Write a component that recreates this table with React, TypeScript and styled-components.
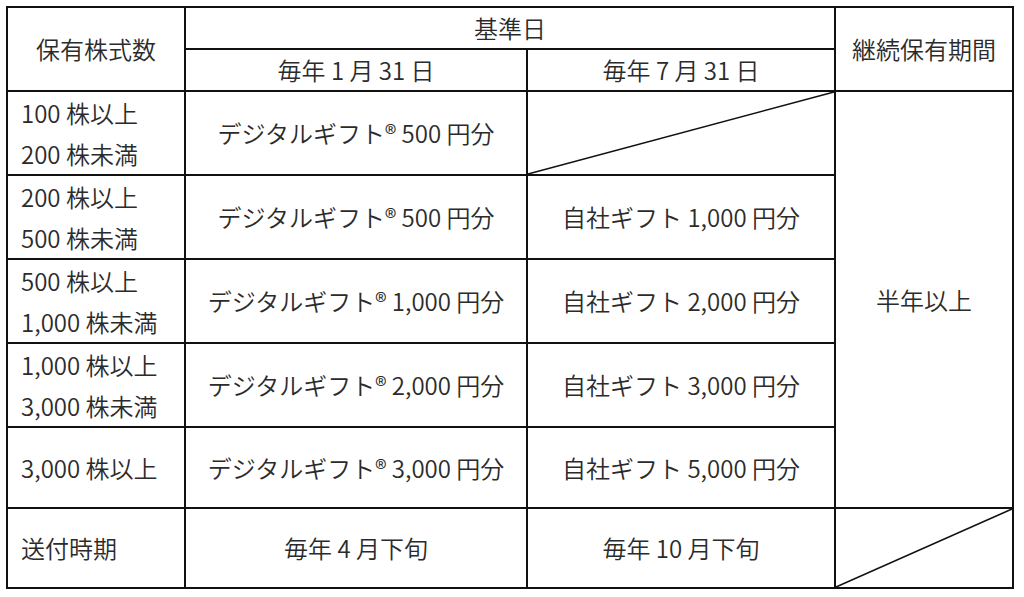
import React from "react";
import styled, { createGlobalStyle } from "styled-components";

const Global = createGlobalStyle`
  html, body { margin: 0; padding: 0; background: #ffffff; }
  body { font-family: "Noto Sans CJK JP", "Noto Sans", sans-serif; }
`;

const Page = styled.div`
  padding: 6px 0 0 6px;
`;

const Table = styled.table`
  border-collapse: collapse;
  table-layout: fixed;
  width: 1008px;
  color: #2b2b2b;
  font-size: 24px;
  font-weight: 350;
`;

const Row = styled.tr<{ $h: number }>`
  height: ${(p) => p.$h}px;
`;

const Cell = styled.td<{ $align?: "left" | "center" }>`
  border: 2px solid #111;
  padding: 0 0 0 ${(p) => (p.$align === "left" ? "13px" : "0")};
  text-align: ${(p) => p.$align ?? "center"};
  vertical-align: middle;
  line-height: 30px;
  white-space: nowrap;
  position: relative;
`;

const Line = styled.div`
  display: block;
  line-height: 41px;
`;

const Slash = styled.svg`
  position: absolute;
  inset: 0;
  width: 100%;
  height: 100%;
  display: block;
  overflow: visible;
`;

const Diagonal: React.FC<{ rowSpan?: number }> = ({ rowSpan }) => (
  <Cell rowSpan={rowSpan}>
    <Slash>
      <line x1="0" y1="100%" x2="100%" y2="0" stroke="#111" strokeWidth="1.4" />
    </Slash>
  </Cell>
);

type Tier = { lines: string[]; jan: string; jul: string | null };

const tiers: Tier[] = [
  { lines: ["100 株以上", "200 株未満"], jan: "デジタルギフト® 500 円分", jul: null },
  { lines: ["200 株以上", "500 株未満"], jan: "デジタルギフト® 500 円分", jul: "自社ギフト 1,000 円分" },
  { lines: ["500 株以上", "1,000 株未満"], jan: "デジタルギフト® 1,000 円分", jul: "自社ギフト 2,000 円分" },
  { lines: ["1,000 株以上", "3,000 株未満"], jan: "デジタルギフト® 2,000 円分", jul: "自社ギフト 3,000 円分" },
  { lines: ["3,000 株以上"], jan: "デジタルギフト® 3,000 円分", jul: "自社ギフト 5,000 円分" },
];

const heights = [84, 84, 84, 84, 81];

export default function App() {
  return (
    <>
      <Global />
      <Page>
        <Table>
          <colgroup>
            <col style={{ width: 178 }} />
            <col style={{ width: 342 }} />
            <col style={{ width: 308 }} />
            <col style={{ width: 178 }} />
          </colgroup>
          <tbody>
            <Row $h={42}>
              <Cell rowSpan={2}>保有株式数</Cell>
              <Cell colSpan={2}>基準日</Cell>
              <Cell rowSpan={2}>継続保有期間</Cell>
            </Row>
            <Row $h={42}>
              <Cell>毎年 1 月 31 日</Cell>
              <Cell>毎年 7 月 31 日</Cell>
            </Row>
            {tiers.map((t, i) => (
              <Row $h={heights[i]} key={i}>
                <Cell $align="left">
                  {t.lines.map((l) => (
                    <Line key={l}>{l}</Line>
                  ))}
                </Cell>
                <Cell>{t.jan}</Cell>
                {t.jul === null ? <Diagonal /> : <Cell>{t.jul}</Cell>}
                {i === 0 && <Cell rowSpan={5}>半年以上</Cell>}
              </Row>
            ))}
            <Row $h={80}>
              <Cell $align="left">送付時期</Cell>
              <Cell>毎年 4 月下旬</Cell>
              <Cell>毎年 10 月下旬</Cell>
              <Diagonal />
            </Row>
          </tbody>
        </Table>
      </Page>
    </>
  );
}
